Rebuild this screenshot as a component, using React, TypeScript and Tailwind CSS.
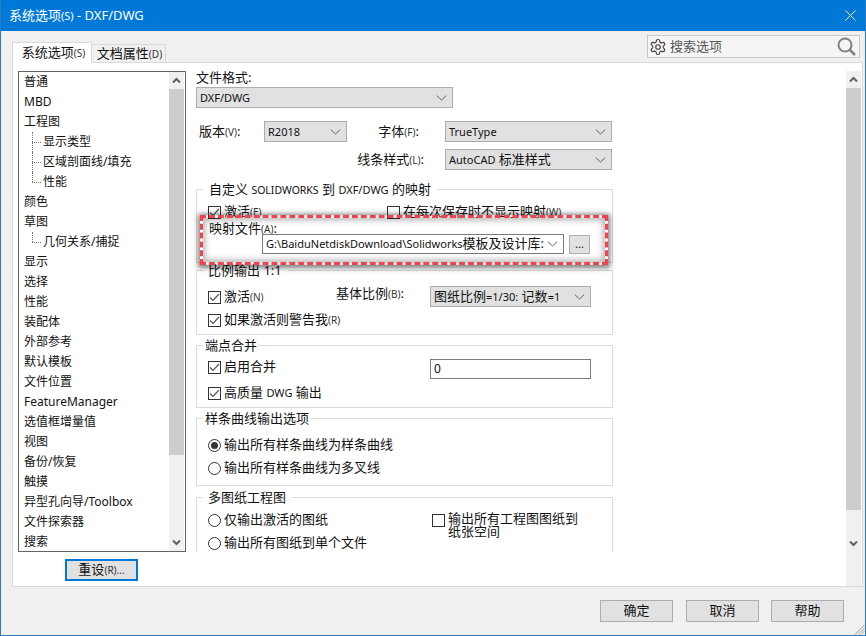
import type { ReactNode } from 'react';

const FONT = "font-['Noto_Sans','Noto_Sans_CJK_SC',sans-serif]";

const treeItems: { label: string; child?: 'mid' | 'last' }[] = [
  { label: '普通' },
  { label: 'MBD' },
  { label: '工程图' },
  { label: '显示类型', child: 'mid' },
  { label: '区域剖面线/填充', child: 'mid' },
  { label: '性能', child: 'last' },
  { label: '颜色' },
  { label: '草图' },
  { label: '几何关系/捕捉', child: 'last' },
  { label: '显示' },
  { label: '选择' },
  { label: '性能' },
  { label: '装配体' },
  { label: '外部参考' },
  { label: '默认模板' },
  { label: '文件位置' },
  { label: 'FeatureManager' },
  { label: '选值框增量值' },
  { label: '视图' },
  { label: '备份/恢复' },
  { label: '触摸' },
  { label: '异型孔向导/Toolbox' },
  { label: '文件探索器' },
  { label: '搜索' },
];

function Chevron({ up }: { up?: boolean }) {
  return (
    <svg width="9" height="7" viewBox="0 0 9 7" className="text-[#606060]">
      <path d={up ? 'M1 5.5 4.5 2 8 5.5' : 'M1 1.5 4.5 5 8 1.5'} fill="none" stroke="currentColor" strokeWidth="2" />
    </svg>
  );
}

function ScrollBar({ thumb, rest }: { thumb: number; rest: number }) {
  return (
    <div className="w-[15px] shrink-0 flex flex-col bg-[#f0f0f0]">
      <div className="h-[17px] flex items-center justify-center"><Chevron up /></div>
      <div className="bg-[#cdcdcd]" style={{ height: thumb }} />
      <div style={{ height: rest }} />
      <div className="h-[17px] flex items-center justify-center"><Chevron /></div>
    </div>
  );
}

function Caret() {
  return (
    <svg width="11" height="6" viewBox="0 0 11 6" className="shrink-0 text-[#606060]">
      <path d="M.8.6 5.5 5 10.2.6" fill="none" stroke="currentColor" strokeWidth="1" />
    </svg>
  );
}

function Latin({ children }: { children: string }) {
  return <span className="text-[11px]">{children}</span>;
}

function Select({ value, className }: { value: ReactNode; className: string }) {
  return (
    <div className={`h-[21px] flex items-center justify-between pl-[3px] pr-[5px] border border-[#adadad] bg-[#e1e1e1] text-[13px] text-[#111] ${className}`}>
      <span className="whitespace-nowrap">{value}</span>
      <Caret />
    </div>
  );
}

function Hot({ children }: { children: string }) {
  return <span className="text-[10px] text-[#333]">{children}</span>;
}

function Check({ checked, children }: { checked?: boolean; children: ReactNode }) {
  return (
    <div className="flex items-center gap-[3px] h-[16px] text-[13px] text-[#111] whitespace-nowrap">
      <span className="w-[13px] h-[13px] shrink-0 border border-[#333] bg-white flex items-center justify-center">
        {checked && (
          <svg width="11" height="9" viewBox="0 0 11 9">
            <path d="M1 4.5 4 7.5 10 1" fill="none" stroke="#555" strokeWidth="1.2" />
          </svg>
        )}
      </span>
      <span>{children}</span>
    </div>
  );
}

function Radio({ checked, children }: { checked?: boolean; children: ReactNode }) {
  return (
    <div className="flex items-center gap-[3px] h-[16px] text-[13px] text-[#111] whitespace-nowrap">
      <span className="w-[13px] h-[13px] shrink-0 rounded-full border border-[#333] bg-white flex items-center justify-center">
        {checked && <span className="w-[7px] h-[7px] rounded-full bg-[#333]" />}
      </span>
      <span>{children}</span>
    </div>
  );
}

function Group({ title, legend, height, className, children }: { title: ReactNode; legend: string; height: string; className?: string; children: ReactNode }) {
  return (
    <div className={`relative shrink-0 w-[417px] border border-[#dcdcdc] pl-[11px] ${height} ${className ?? ''}`}>
      <div className={`absolute left-[6px] top-[-9px] bg-white text-[13px] leading-[16px] text-[#111] whitespace-nowrap ${legend}`}>{title}</div>
      {children}
    </div>
  );
}

function FooterButton({ children, className }: { children: string; className?: string }) {
  return (
    <div className={`w-[73px] h-[22px] border border-[#adadad] bg-[#e1e1e1] flex items-center justify-center text-[13px] text-[#111] ${className ?? ''}`}>
      {children}
    </div>
  );
}

export default function App() {
  return (
    <div className={`${FONT} w-[866px] h-[636px] flex flex-col overflow-hidden bg-[#f0f0f0] border-x border-b border-[#2b7cc4]`}>
      <div className="h-[31px] -mx-px shrink-0 bg-[#0078d7] flex items-center justify-between pl-[9px] pr-[10px] text-white text-[13px]">
        <span>系统选项<span className="text-[11px]">(S)</span> - DXF/DWG</span>
        <svg width="11" height="11" viewBox="0 0 11 11">
          <path d="M.5.5l10 10M10.5.5l-10 10" stroke="#fff" strokeWidth="1" />
        </svg>
      </div>

      <div className="h-[31px] shrink-0 flex items-end justify-between pl-[11px] pr-[5px]">
        <div className="flex items-end text-[#111]">
          <div className="relative z-10 -mb-px w-[80px] h-[21px] bg-white border border-b-0 border-[#d9d9d9] flex items-center justify-center pl-[3px] text-[13px]">
            <span>系统选项<Hot>(S)</Hot></span>
          </div>
          <div className="w-[74px] h-[18px] bg-[#f0f0f0] border border-b-0 border-l-0 border-[#d9d9d9] flex items-center justify-center pl-[2px] text-[13px]">
            <span>文档属性<Hot>(D)</Hot></span>
          </div>
        </div>
        <div className="mb-[4px] w-[213px] h-[23px] border border-[#c8c8c8] bg-[#f5f5f5] flex items-center justify-between pl-[1px] pr-[3px]">
          <div className="flex items-center gap-[3px] text-[13px] text-[#555]">
            <svg width="18" height="18" viewBox="0 0 24 24" fill="none" stroke="#444" strokeWidth="1.6">
              <path d="M12.22 2h-.44a2 2 0 0 0-2 2v.18a2 2 0 0 1-1 1.73l-.43.25a2 2 0 0 1-2 0l-.15-.08a2 2 0 0 0-2.73.73l-.22.38a2 2 0 0 0 .73 2.73l.15.1a2 2 0 0 1 1 1.72v.51a2 2 0 0 1-1 1.74l-.15.09a2 2 0 0 0-.73 2.73l.22.38a2 2 0 0 0 2.73.73l.15-.08a2 2 0 0 1 2 0l.43.25a2 2 0 0 1 1 1.73V20a2 2 0 0 0 2 2h.44a2 2 0 0 0 2-2v-.18a2 2 0 0 1 1-1.73l.43-.25a2 2 0 0 1 2 0l.15.08a2 2 0 0 0 2.73-.73l.22-.39a2 2 0 0 0-.73-2.73l-.15-.08a2 2 0 0 1-1-1.74v-.5a2 2 0 0 1 1-1.74l.15-.09a2 2 0 0 0 .73-2.73l-.22-.38a2 2 0 0 0-2.73-.73l-.15.08a2 2 0 0 1-2 0l-.43-.25a2 2 0 0 1-1-1.73V4a2 2 0 0 0-2-2z" />
              <circle cx="12" cy="12" r="3" />
            </svg>
            <span>搜索选项</span>
          </div>
          <svg width="19" height="19" viewBox="0 0 19 19" fill="none" stroke="#808080">
            <circle cx="8" cy="8" r="6.5" strokeWidth="2" />
            <path d="M12.5 12.5 18 18" strokeWidth="2.5" />
          </svg>
        </div>
      </div>

      <div className="h-[525px] shrink-0 ml-[11px] mr-[2px] bg-white border border-[#d9d9d9] flex pt-[8px] pl-[5px] pr-[1px]">
        <div className="w-[168px] shrink-0 flex flex-col">
          <div className="w-[168px] h-[481px] shrink-0 border border-[#646464] flex overflow-hidden">
            <div className="flex-1 text-[12px] text-[#111]">
              {treeItems.map((item, i) => (
                <div key={i} className={`relative h-[20px] flex items-center whitespace-nowrap ${item.child ? 'pl-[24px]' : 'pl-[5px]'}`}>
                  {item.child && (
                    <>
                      <span className={`absolute left-[13px] top-0 border-l border-dotted border-[#777] ${item.child === 'last' ? 'h-[10px]' : 'h-[20px]'}`} />
                      <span className="absolute left-[13px] top-[10px] w-[9px] border-t border-dotted border-[#777]" />
                    </>
                  )}
                  {item.label}
                </div>
              ))}
            </div>
            <ScrollBar thumb={366} rest={79} />
            <div className="w-px shrink-0" />
          </div>
          <div className="mt-[7px] ml-[47px] w-[73px] h-[22px] border-2 border-[#0078d7] bg-[#e1e1e1] flex items-center justify-center text-[13px] text-[#111]">
            <span>重设<Hot>(R)...</Hot></span>
          </div>
        </div>

        <div className="ml-[10px] -mt-[2px] flex-1 h-[483px] overflow-hidden flex flex-col">
          <div className="text-[13px] leading-[16px] h-[18px] shrink-0 text-[#111]">文件格式:</div>
          <Select value={<Latin>DXF/DWG</Latin>} className="shrink-0 w-[257px]" />

          <div className="shrink-0 mt-[13px] flex items-center">
            <span className="w-[68px] pl-[3px] text-[13px] text-[#111]">版本<Hot>(V)</Hot>:</span>
            <Select value={<Latin>R2018</Latin>} className="w-[83px]" />
            <span className="w-[98px] text-right pr-[26px] text-[13px] text-[#111]">字体<Hot>(F)</Hot>:</span>
            <Select value={<Latin>TrueType</Latin>} className="w-[167px]" />
          </div>
          <div className="shrink-0 mt-[7px] flex items-center">
            <span className="w-[249px] text-right pr-[21px] text-[13px] text-[#111]">线条样式<Hot>(L)</Hot>:</span>
            <Select value={<><Latin>AutoCAD</Latin> 标准样式</>} className="w-[167px]" />
          </div>

          <Group
            height="h-[74px]"
            legend="pl-[6px] pr-[6px]"
            className="mt-[19px] pt-[14px]"
            title={<>自定义 <span className="text-[10.5px]">SOLIDWORKS</span> 到 <Latin>DXF/DWG</Latin> 的映射</>}
          >
            <div className="flex">
              <div className="w-[179px]"><Check checked>激活<Hot>(E)</Hot></Check></div>
              <Check>在每次保存时不显示映射<Hot>(W)</Hot></Check>
            </div>
            <div className="h-[16px] pl-px text-[13px] leading-[16px] text-[#111]">映射文件<Hot>(A)</Hot>:</div>
            <div className="flex items-center -mt-[2px] ml-[54px]">
              <div className="w-[302px] h-[20px] border border-[#7a7a7a] bg-white flex items-center justify-between pl-[3px] pr-[5px] text-[13px] text-[#111] overflow-hidden">
                <span className="whitespace-nowrap"><Latin>G:\BaiduNetdiskDownload\Solidworks</Latin>模板及设计库:</span>
                <Caret />
              </div>
              <div className="ml-[5px] w-[21px] h-[19px] border border-[#adadad] bg-[#e1e1e1] flex items-center justify-center text-[11px] text-[#111]">...</div>
            </div>
          </Group>

          <Group height="h-[65px]" legend="pl-[5px] pr-[6px]" className="mt-[7px] pt-[15px]" title="比例输出 1:1">
            <div className="flex items-start">
              <div className="w-[128px] mt-[3px]"><Check checked>激活<Hot>(N)</Hot></Check></div>
              <div className="w-[94px] -mt-[1px] text-[13px] leading-[16px] text-[#111] whitespace-nowrap">基体比例<Hot>(B)</Hot>:</div>
              <Select value={<>图纸比例<Latin>=1/30:</Latin> 记数<Latin>=1</Latin></>} className="w-[161px]" />
            </div>
            <div className="mt-[5px]"><Check checked>如果激活则警告我<Hot>(R)</Hot></Check></div>
          </Group>

          <Group height="h-[63px]" legend="pl-[2px] pr-[1px]" className="mt-[10px] pt-[13px]" title="端点合并">
            <div className="flex items-start">
              <div className="w-[222px]"><Check checked>启用合并</Check></div>
              <div className="w-[161px] h-[20px] border border-[#7a7a7a] bg-white pl-[3px] text-[12px] leading-[18px] text-[#111]">0</div>
            </div>
            <div className="mt-[6px]"><Check checked>高质量 <Latin>DWG</Latin> 输出</Check></div>
          </Group>

          <Group height="h-[68px]" legend="pl-[2px] pr-[1px]" className="mt-[10px] pt-[18px]" title="样条曲线输出选项">
            <Radio checked>输出所有样条曲线为样条曲线</Radio>
            <div className="mt-[7px]"><Radio>输出所有样条曲线为多叉线</Radio></div>
          </Group>

          <Group height="h-[80px]" legend="pl-[5px] pr-[6px]" className="mt-[11px] pt-[14px]" title="多图纸工程图">
            <div className="flex items-start">
              <div className="w-[224px]"><Radio>仅输出激活的图纸</Radio></div>
              <div className="flex items-start gap-[3px] text-[13px] leading-[13px] text-[#111]">
                <span className="mt-[2px] w-[13px] h-[13px] shrink-0 border border-[#333] bg-white" />
                <span className="w-[135px]">输出所有工程图图纸到 纸张空间</span>
              </div>
            </div>
            <div className="-mt-[3px]"><Radio>输出所有图纸到单个文件</Radio></div>
          </Group>
        </div>

        <ScrollBar thumb={422} rest={25} />
      </div>

      <div className="flex-1 relative flex items-start justify-end gap-[12px] pt-[13px] pr-[21px]">
        <FooterButton className="mr-px">确定</FooterButton>
        <FooterButton>取消</FooterButton>
        <FooterButton>帮助</FooterButton>
        <svg width="11" height="11" viewBox="0 0 11 11" className="absolute right-0 bottom-0" stroke="#a0a0a0">
          <path d="M10.5 1 1 10.5M10.5 4 4 10.5M10.5 7 7 10.5" />
        </svg>
      </div>

      <div className="absolute left-[200px] top-[215px] w-[408px] h-[50px] border-[3px] border-dashed border-[#f5414c] shadow-[0_1px_5px_2px_rgba(0,0,0,0.5),inset_0_0_6px_2px_rgba(0,0,0,0.3)]" />
    </div>
  );
}
